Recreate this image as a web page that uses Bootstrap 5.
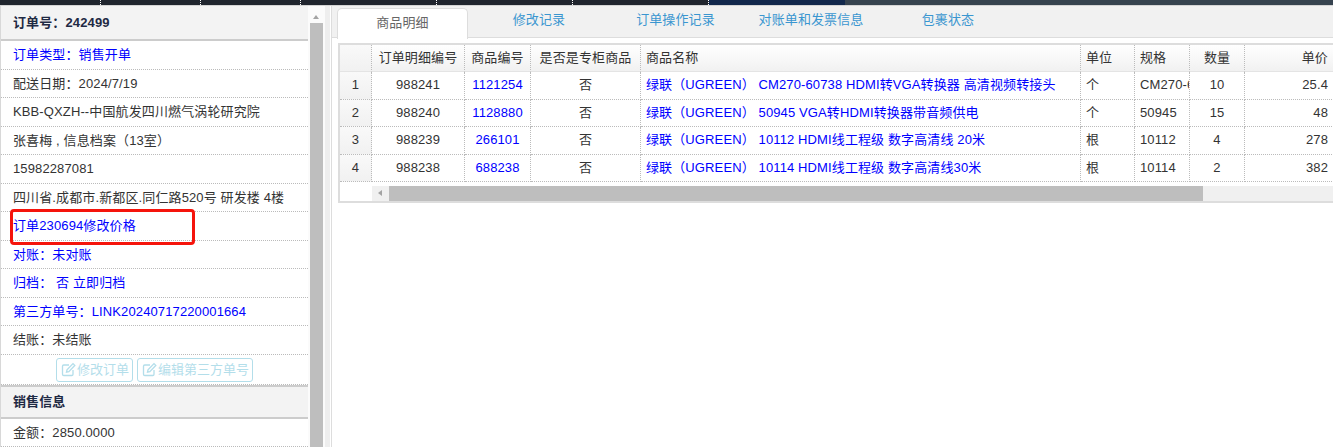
<!DOCTYPE html>
<html lang="zh">
<head>
<meta charset="utf-8">
<title>订单</title>
<link rel="stylesheet" href="https://cdn.jsdelivr.net/npm/bootstrap@5.3.0/dist/css/bootstrap.min.css">
<style>
html,body{height:447px;overflow:hidden;background:#fff}
body{font:13px/1.4 "Liberation Sans","Noto Sans CJK SC",sans-serif;color:#333;letter-spacing:.12px}
.topstrip{height:5px;background:#20252e}
.topseg{border-right:1px dotted #fff}
.seg-a{width:101px}.seg-b{width:100px}.seg-c{width:136px}
.seg-navy{width:136px;background:#12284c}
.seg-slate{background:#36434f}
.workspace{height:442px;border-top:1px solid #d4d4d4}
.sidepane{width:308px;border-left:1px solid #d8d8d8;overflow:hidden}
.sidehead{height:35px;background:#f3f3f3;border-bottom:2px solid #ccc;padding-left:12px;font-weight:700;color:#1f2a44;line-height:34px}
.siderow{height:28.5px;line-height:27px;padding-left:12px;border-bottom:1px dotted #bbb;white-space:nowrap;position:relative}
.siderow a{color:#00f;text-decoration:none}
.redmark{position:absolute;left:9px;top:-3px;width:185px;height:36px;border:3px solid #f5140c;border-radius:4px}
.btnrow{height:30px;padding-top:3px;border-bottom:1px dotted #bbb}
.ghostbtn{height:24px;padding:0 3px 0 4px;font-size:13px;line-height:22px;color:#4bb1cf;border:1px solid #4bb1cf;border-radius:3px;background:#fff;opacity:.45;display:inline-flex;align-items:center;gap:1px}
.ghostbtn.disabled{color:#4bb1cf;border-color:#4bb1cf;opacity:.42}
.sidesection{height:34px;border-top:2px solid #ccc;line-height:29px}
.vscroll{width:17px;background:#fbfbfb;position:relative}
.vthumb{position:absolute;left:2px;right:2px;top:17px;bottom:0;background:#bebebe}
.vup{position:absolute;left:5px;top:9px;border:3.5px solid transparent;border-top:0;border-bottom:4px solid #a3a3a3}
.splitter{width:5px;background:#eee}
.gapline{width:1px;background:#fff}
.mainpane{min-width:0;border-left:1px solid #ddd;overflow:hidden}
.tabstrip{height:32px;background:#f1f1f1;border-bottom:1px solid #ddd;padding-left:5px}
.tabitem{height:31px;line-height:28px;text-align:center;color:#3a96d0;display:block;text-decoration:none}
.tabitem.current{width:131px;background:#fff;border:1px solid #ddd;border-bottom:0;border-radius:5px 5px 0 0;color:#666;margin-top:2px;line-height:27px}
.t2{width:142px}.t3{width:131px}.t4{width:140px}.t5{width:134px}
.gridbox{margin:5px 0 0 6px;border-top:2px solid #ddd;border-left:2px solid #ddd;border-bottom:2px solid #ddd;height:160px;overflow:hidden}
.grid{table-layout:fixed;width:994px;margin:0;border-collapse:separate;border-spacing:0;--bs-table-bg:transparent;color:#333;font-size:13px}
.grid th,.grid td{padding:0 5px;border:0;border-right:1px dotted #bbb;border-bottom:1px dotted #bbb;height:27.5px;vertical-align:middle;white-space:nowrap;overflow:hidden;font-weight:400;color:#333;box-shadow:none}
.grid thead th{height:27px;background:linear-gradient(#fff,#f1f1f1);border-bottom:1px solid #e4e4e4}
.grid .numcell{background:linear-gradient(#f9f9f9,#f1f1f1);text-align:center}
.grid td a{color:#00f;text-decoration:none}
.clipcell{padding-right:0!important}
.hscroll{height:15px;margin:4px 0 0 32px;background:#f0f0f0;position:relative}
.hleft{position:absolute;left:6px;top:4px;border:3.5px solid transparent;border-left:0;border-right:4px solid #a3a3a3}
.hthumb{position:absolute;left:17px;top:0;bottom:0;width:814px;background:#bebebe}
</style>
</head>
<body>
<div class="topstrip d-flex">
  <div class="topseg seg-a"></div><div class="topseg seg-b"></div><div class="topseg seg-b"></div><div class="topseg seg-c"></div><div class="topseg seg-c"></div><div class="topseg seg-c"></div><div class="seg-navy"></div><div class="seg-slate flex-grow-1"></div>
</div>
<div class="workspace d-flex">
  <div class="sidepane flex-shrink-0">
    <div class="sidehead">订单号：242499</div>
    <div class="siderow"><a href="#">订单类型：销售开单</a></div>
    <div class="siderow">配送日期：2024/7/19</div>
    <div class="siderow">KBB-QXZH--中国航发四川燃气涡轮研究院</div>
    <div class="siderow">张喜梅 , 信息档案（13室）</div>
    <div class="siderow">15982287081</div>
    <div class="siderow">四川省.成都市.新都区.同仁路520号 研发楼 4楼</div>
    <div class="siderow"><a href="#">订单230694修改价格</a><span class="redmark"></span></div>
    <div class="siderow"><a href="#">对账：未对账</a></div>
    <div class="siderow"><a href="#">归档：</a>&nbsp;<a href="#">否 立即归档</a></div>
    <div class="siderow"><a href="#">第三方单号：LINK20240717220001664</a></div>
    <div class="siderow">结账：未结账</div>
    <div class="btnrow d-flex justify-content-center gap-1">
      <button class="btn ghostbtn disabled" type="button"><svg width="15" height="15" viewBox="0 0 15 15" fill="none" stroke="currentColor" stroke-width="1.3"><path d="M12 8v4.2a1.3 1.3 0 0 1-1.3 1.3H2.8a1.3 1.3 0 0 1-1.3-1.3V4.3A1.3 1.3 0 0 1 2.8 3H8"/><path d="M5.5 10.2l.5-2.4L12 1.6l1.8 1.8-6 6.2z"/></svg>修改订单</button>
      <button class="btn ghostbtn disabled" type="button"><svg width="15" height="15" viewBox="0 0 15 15" fill="none" stroke="currentColor" stroke-width="1.3"><path d="M12 8v4.2a1.3 1.3 0 0 1-1.3 1.3H2.8a1.3 1.3 0 0 1-1.3-1.3V4.3A1.3 1.3 0 0 1 2.8 3H8"/><path d="M5.5 10.2l.5-2.4L12 1.6l1.8 1.8-6 6.2z"/></svg>编辑第三方单号</button>
    </div>
    <div class="sidehead sidesection">销售信息</div>
    <div class="siderow">金额：2850.0000</div>
  </div>
  <div class="vscroll flex-shrink-0"><span class="vup"></span><div class="vthumb"></div></div>
  <div class="splitter flex-shrink-0"></div>
  <div class="gapline flex-shrink-0"></div>
  <div class="mainpane flex-grow-1">
    <nav class="tabstrip d-flex">
      <a class="tabitem current" href="#">商品明细</a>
      <a class="tabitem t2" href="#">修改记录</a>
      <a class="tabitem t3" href="#">订单操作记录</a>
      <a class="tabitem t4" href="#">对账单和发票信息</a>
      <a class="tabitem t5" href="#">包裹状态</a>
    </nav>
    <div class="gridbox">
      <table class="table grid">
        <colgroup><col style="width:32px"><col style="width:93px"><col style="width:66px"><col style="width:110px"><col style="width:440px"><col style="width:54px"><col style="width:55px"><col style="width:55px"><col style="width:89px"></colgroup>
        <thead>
          <tr><th class="numcell"></th><th class="text-center">订单明细编号</th><th class="text-center">商品编号</th><th class="text-center">是否是专柜商品</th><th>商品名称</th><th>单位</th><th>规格</th><th class="text-center">数量</th><th class="text-end">单价</th></tr>
        </thead>
        <tbody>
          <tr><td class="numcell">1</td><td class="text-center">988241</td><td class="text-center"><a href="#">1121254</a></td><td class="text-center">否</td><td><a href="#">绿联（UGREEN） CM270-60738 HDMI转VGA转换器 高清视频转接头</a></td><td>个</td><td class="clipcell">CM270-60738</td><td class="text-center">10</td><td class="text-end">25.4</td></tr>
          <tr><td class="numcell">2</td><td class="text-center">988240</td><td class="text-center"><a href="#">1128880</a></td><td class="text-center">否</td><td><a href="#">绿联（UGREEN） 50945 VGA转HDMI转换器带音频供电</a></td><td>个</td><td class="clipcell">50945</td><td class="text-center">15</td><td class="text-end">48</td></tr>
          <tr><td class="numcell">3</td><td class="text-center">988239</td><td class="text-center"><a href="#">266101</a></td><td class="text-center">否</td><td><a href="#">绿联（UGREEN） 10112 HDMI线工程级 数字高清线 20米</a></td><td>根</td><td class="clipcell">10112</td><td class="text-center">4</td><td class="text-end">278</td></tr>
          <tr><td class="numcell">4</td><td class="text-center">988238</td><td class="text-center"><a href="#">688238</a></td><td class="text-center">否</td><td><a href="#">绿联（UGREEN） 10114 HDMI线工程级 数字高清线30米</a></td><td>根</td><td class="clipcell">10114</td><td class="text-center">2</td><td class="text-end">382</td></tr>
        </tbody>
      </table>
      <div class="hscroll"><span class="hleft"></span><div class="hthumb"></div></div>
    </div>
  </div>
</div>
<script src="https://cdn.jsdelivr.net/npm/bootstrap@5.3.0/dist/js/bootstrap.bundle.min.js"></script>
</body>
</html>
